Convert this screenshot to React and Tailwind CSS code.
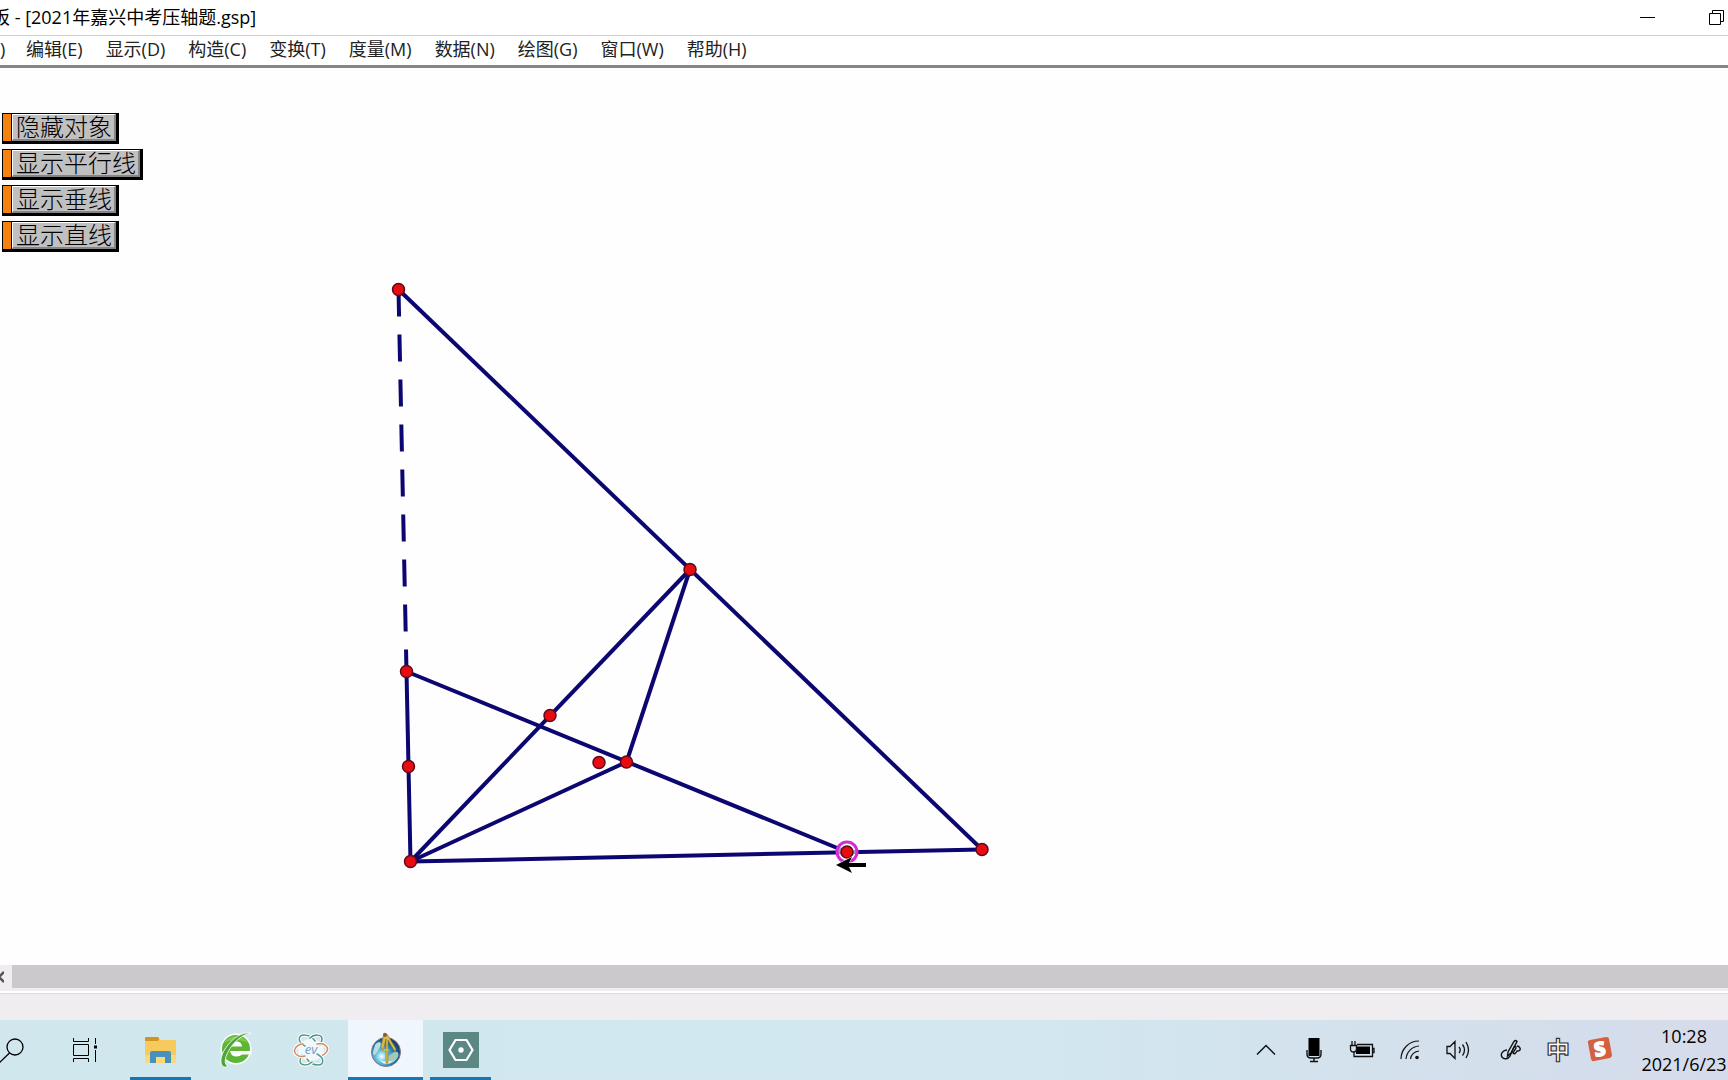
import { clsx } from 'clsx'

const menus = ['编辑(E)', '显示(D)', '构造(C)', '变换(T)', '度量(M)', '数据(N)', '绘图(G)', '窗口(W)', '帮助(H)']

const actions = ['隐藏对象', '显示平行线', '显示垂线', '显示直线']

// sketch coordinates, relative to the top left of the canvas
const P = {
  top: [398.5, 221.5],
  mid: [690, 501.5],
  origin: [410.5, 793.5],
  right: [982, 781.5],
  drag: [847, 784],
  left: [406.5, 603.5],
  leftMid: [408.5, 698.5],
  inner: [550, 647.5],
  free: [599, 694.5],
  cross: [626.5, 694],
}

const segments = [
  ['top', 'right'],
  ['origin', 'mid'],
  ['mid', 'cross'],
  ['origin', 'cross'],
  ['left', 'drag'],
  ['left', 'origin'],
  ['origin', 'right'],
]

function TitleBar() {
  return (
    <header className="flex h-9 shrink-0 items-center border-b border-[#d0d0d0] bg-white">
      <h1 className="-ml-2 flex-1 whitespace-pre pb-0.5 text-lg leading-8 text-black">板 - [2021年嘉兴中考压轴题.gsp]</h1>
      <button aria-label="Minimize" className="flex h-8 w-[69px] items-center justify-center">
        <svg width="15" height="15" stroke="#000" fill="none"><path d="M0 7.5H15" /></svg>
      </button>
      <button aria-label="Restore" className="flex h-8 w-[46px] items-center pl-[27px]">
        <svg width="15" height="15" stroke="#000" fill="none"><path d="M.5 3.5H11.5V14.5H.5ZM3.5 3.5V.5H14.5V11.5H11.5" /></svg>
      </button>
    </header>
  )
}

function MenuBar() {
  return (
    <nav className="flex h-8 shrink-0 items-center border-b-[3px] border-[#858585] bg-white pb-1 text-lg leading-6 text-[#222]">
      <button className="w-[26px] text-left">)</button>
      <div className="flex gap-[23px]">
        {menus.map((m) => (
          <button key={m} className="whitespace-nowrap">{m}</button>
        ))}
      </div>
    </nav>
  )
}

function ActionButton({ label }) {
  return (
    <button className="flex h-[31px] border border-r-[3px] border-b-[3px] border-black bg-[#c0c0c0]">
      <span className="h-full w-[9px] border-r border-black bg-[#f5820f]" />
      <span className="h-full border-t border-r-2 border-b-2 border-l border-t-white border-r-[#858585] border-b-[#858585] border-l-white pr-0.5 pl-[3px] text-2xl leading-6 font-light text-black">
        {label}
      </span>
    </button>
  )
}

function Sketch() {
  return (
    <svg className="absolute inset-0 h-full w-full">
      <g stroke="#0c0670" strokeWidth="4">
        <line x1={P.top[0]} y1={P.top[1]} x2={P.left[0]} y2={P.left[1]} strokeDasharray="27 18" />
        {segments.map(([a, b]) => (
          <line key={a + b} x1={P[a][0]} y1={P[a][1]} x2={P[b][0]} y2={P[b][1]} />
        ))}
      </g>
      <circle cx={P.drag[0]} cy={P.drag[1]} r="10" fill="#fff" fillOpacity=".6" stroke="#d42bd6" strokeWidth="3" />
      {Object.entries(P).map(([name, [x, y]]) => (
        <circle key={name} cx={x} cy={y} r="6" fill="#e80c12" stroke="#5d0a18" strokeWidth="1.5" />
      ))}
      {/* drag cursor */}
      <path d="M836 797L852 789L849 795H866V799H849L852 805Z" fill="#000" stroke="#fff" strokeWidth="1" paintOrder="stroke" />
    </svg>
  )
}

function ScrollBar() {
  return (
    <div className="shrink-0 bg-[#efedf0]">
      <div className="flex h-[23px]">
        <button aria-label="Scroll left" className="flex w-3 items-center">
          <svg width="4" height="12" fill="none" stroke="#555" strokeWidth="2.5"><path d="M4 1L-1 6L4 11" /></svg>
        </button>
        <div className="flex-1 bg-[#cbc9cc]" />
      </div>
      <div className="mt-[3px] h-0.5 bg-white" />
      <div className="h-[27px] border-t border-[#dddadd]" />
    </div>
  )
}

function Search() {
  return (
    <svg width="26" height="26" fill="none" stroke="#000" strokeWidth="1.3">
      <circle cx="15" cy="10" r="8" />
      <path d="M9.500 16L-1 26" />
    </svg>
  )
}

function TaskView() {
  return (
    <svg width="25" height="24" fill="none" stroke="#000">
      <path d="M.5 0V3.5H15.5V0M.5 6.5H15.5V17.5H.5ZM.5 24V20.5H15.5V24M22.5 0V6M22.5 12V24" />
      <path d="M21 7.5H24V10.5H21Z" fill="#000" stroke="none" />
    </svg>
  )
}

function Folder() {
  return (
    <svg width="33" height="28">
      <path d="M1 2Q1 1 2 1H14L17 4H31Q32 4 32 5V26H1Z" fill="#f6ca5c" />
      <path d="M1 2Q1 1 2 1H14Q16 2 14 5H1Z" fill="#cf951e" />
      <path d="M1 19H32V26Q32 27 31 27H2Q1 27 1 26Z" fill="#fad979" />
      <path d="M6 27V17Q6 15 8 15H25Q27 15 27 17V27H21V21H12V27Z" fill="#4692be" />
    </svg>
  )
}

function Browser() {
  return (
    <svg width="34" height="38">
      <circle cx="17" cy="18" r="15.500" fill="#fff" />
      <circle cx="17" cy="18" r="14" fill="#5cb533" />
      <path d="M5 12A14 14 0 0 1 29 12Q18 6 5 12Z" fill="#80ca50" />
      <path d="M11 15.500Q12.500 10.500 17.500 10.500Q22.500 10.500 23 15.500Z" fill="#fff" />
      <path d="M11 20H32.500V23.500H23Q21 25.500 17.500 25.500Q12 25.500 11 20Z" fill="#fff" />
      <path d="M32 2.500C24 0 13 7 6 18C1 26 1 33 4 35.500C6 36.500 8 36 9 35C6 34 5 30 8 23C13 12 23 3 32 2.500Z" fill="#4da338" stroke="#fff" strokeWidth=".8" />
    </svg>
  )
}

// arms of the recorder logo, each one starts near the centre and hooks round
const arms = [
  ['M12 13C4 9 5 2 11 2C16 2 20 5 22 8', '#4f9a92'],
  ['M17 5C21 1 29 1 29 6C29 8 28 10 27 12', '#3d9383'],
  ['M24 11C31 9 36 14 34 18C33 21 29 23 26 23', '#d08a66'],
  ['M24 21C32 25 31 32 25 32C20 32 16 29 14 26', '#4f9a92'],
  ['M19 29C15 33 7 33 7 28C7 26 8 24 9 22', '#579c7c'],
  ['M12 23C5 25 0 20 2 16C3 13 7 11 10 11', '#d08a66'],
]

function EvCapture() {
  return (
    <svg width="36" height="34" fill="none">
      <ellipse cx="18" cy="17" rx="13" ry="11" fill="#fff" fillOpacity=".7" />
      {arms.map(([d, color]) => (
        <g key={d}>
          <path d={d} stroke="#fff" strokeWidth="3.500" />
          <path d={d} stroke={color} strokeWidth="1.500" strokeLinecap="round" />
        </g>
      ))}
      <text x="18" y="21" textAnchor="middle" fontSize="13" fontStyle="italic" fill="#6d9ccb">ev</text>
    </svg>
  )
}

function Sketchpad() {
  return (
    <svg width="32" height="36">
      <defs>
        <radialGradient id="globe" cx="35%" cy="65%" r="75%">
          <stop offset="0" stopColor="#fff" />
          <stop offset=".25" stopColor="#69c7e3" />
          <stop offset=".6" stopColor="#1976b4" />
          <stop offset="1" stopColor="#18294f" />
        </radialGradient>
      </defs>
      <circle cx="16" cy="20" r="14.500" fill="url(#globe)" stroke="#8b7484" />
      <path d="M5 13C10 7 13 11 9 17C5 24 3 25 3 20Z" fill="#b7dfe0" />
      <path d="M20 23C25 18 30 19 28 25C25 31 17 34 12 31Z" fill="#9fc9ba" />
      <path d="M9 28Q16 35 24 28Q17 31 9 28Z" fill="#eef6f6" />
      <path d="M14 1L11 15L13 19L16 7L16 31L18 31L18 8L25 20L26 17L17 2Z" fill="#d9bd45" stroke="#8d7a2c" strokeWidth=".6" />
      <path d="M13 18H19" stroke="#d9bd45" strokeWidth="1.500" />
      <circle cx="15" cy="3" r="2" fill="#8d5841" />
    </svg>
  )
}

function HexTool() {
  return (
    <svg width="36" height="36" fill="none">
      <rect width="36" height="36" fill="#5b8784" />
      <path d="M12.5 8H23.5L29.5 18L23.5 28H12.5L6.500 18Z" stroke="#fff" strokeWidth="2.2" />
      <circle cx="18" cy="18" r="2.7" fill="#fff" />
    </svg>
  )
}

const tasks = [
  { name: 'Task View', icon: TaskView },
  { name: 'File Explorer', icon: Folder, open: true },
  { name: 'Browser', icon: Browser },
  { name: 'Recorder', icon: EvCapture },
  { name: 'Sketchpad', icon: Sketchpad, active: true },
  { name: 'Tool', icon: HexTool, open: true },
]

const tray = [
  {
    name: 'Hidden icons',
    width: 'w-12',
    icon: <svg width="20" height="12" fill="none" stroke="#111" strokeWidth="1.5"><path d="M1 10.500L10 1.500L19 10.500" /></svg>,
  },
  {
    name: 'Microphone',
    width: 'w-12',
    icon: (
      <svg width="16" height="26" fill="none" stroke="#111" strokeWidth="1.4">
        <rect x="2.500" y="1" width="11" height="18" fill="#000" stroke="none" />
        <path d="M1 13V17Q1 21 5 21H11Q15 21 15 17V13M8 21V24M4 24.500H12" />
      </svg>
    ),
  },
  {
    name: 'Battery',
    width: 'w-12',
    icon: (
      <svg width="26" height="18" fill="none" stroke="#111" strokeWidth="1.300">
        <path d="M8 3.500H23.500V15.500H5V11M23.500 7.500H25V11.500H23.500" />
        <path d="M7 5.500H21V13H7Z" fill="#000" stroke="none" />
        <path d="M1.500 4.500H7.500V8Q7.500 11 4.500 11Q1.500 11 1.500 8ZM3 4V0M6 4V0" fill="#d5deec" />
      </svg>
    ),
  },
  {
    name: 'Network',
    width: 'w-12',
    icon: (
      <svg width="20" height="20" fill="none" stroke="#111" strokeWidth="1.200">
        <path d="M1 19A18 18 0 0 1 19 1M6 19A14 14 0 0 1 19 6M10.500 19A9 9 0 0 1 19 11" />
        <circle cx="17" cy="17.500" r="1.800" fill="#111" stroke="none" />
      </svg>
    ),
  },
  {
    name: 'Volume',
    width: 'w-12',
    icon: (
      <svg width="24" height="20" fill="none" stroke="#111" strokeWidth="1.300">
        <path d="M1 6.500H4L9 1.500V18.500L4 13.500H1ZM13 7Q15.500 10 13 13M16.500 4.500Q20.500 10 16.500 15.500M20 2Q25 10 20 18" />
      </svg>
    ),
  },
  {
    name: 'Pen',
    width: 'w-[58px]',
    icon: (
      <svg width="22" height="22" fill="none" stroke="#111" strokeWidth="1.400">
        <path d="M7.500 17L8 13L14 2.500Q15.500 .5 17 2.500L11 14Z" />
        <path d="M7 11C3 11 0 15 2 18C4 21 8 20 10 17L14 8Q16 6 16 9L13 14Q15 16 17 12Q21 12 20 9Q19 7 17 7" />
      </svg>
    ),
  },
  {
    name: 'Input mode',
    width: 'w-9',
    icon: (
      <svg width="32" height="40">
        <text x="16" y="29" textAnchor="middle" fontSize="24" fontWeight="700" fill="#fff" stroke="#333" strokeWidth="1.200">中</text>
      </svg>
    ),
  },
  {
    name: 'Input method',
    width: 'w-12',
    icon: (
      <svg width="32" height="40">
        <path d="M4 13Q3 11 6 10L22 7Q25 7 25 9L28 25Q28 27 26 28L10 31Q8 32 7 29Z" fill="#d5603f" />
        <text x="16" y="26" fontSize="20" fontWeight="800" textAnchor="middle" fill="#fff" stroke="#fff" transform="rotate(-10 16 20)">S</text>
      </svg>
    ),
  },
]

function Taskbar() {
  return (
    <footer className="flex h-[60px] shrink-0 items-stretch bg-linear-to-r from-[#d1e7ee] via-[#d2e7f0] via-60% to-[#d5dbea]">
      <button aria-label="Search" className="flex w-12 items-center"><Search /></button>
      {tasks.map(({ name, icon: Icon, open, active }) => (
        <button
          key={name}
          aria-label={name}
          className={clsx('relative flex w-[75px] items-center justify-center', active && 'bg-[#eff7fc]')}
        >
          <Icon />
          {(open || active) && (
            <span className={clsx('absolute bottom-0 h-[3px] bg-[#1776b5]', active ? 'inset-x-0' : 'inset-x-[7px]')} />
          )}
        </button>
      ))}
      <div className="ml-auto flex">
        {tray.map(({ name, width, icon }) => (
          <button key={name} aria-label={name} className={clsx('flex items-center justify-center', width)}>
            {icon}
          </button>
        ))}
      </div>
      <button className="ml-4 flex w-[88px] flex-col items-center justify-center text-lg leading-7 whitespace-nowrap text-black">
        <span>10:28</span>
        <span>2021/6/23</span>
      </button>
    </footer>
  )
}

function App() {
  return (
    <div className="flex h-screen flex-col overflow-hidden bg-[#fefefe] font-['Open_Sans','Noto_Sans_CJK_SC',sans-serif]">
      <TitleBar />
      <MenuBar />
      <main className="relative flex-1">
        <Sketch />
        <div className="relative flex w-fit flex-col items-start gap-[5px] pt-[45px] pl-0.5">
          {actions.map((a) => (
            <ActionButton key={a} label={a} />
          ))}
        </div>
      </main>
      <ScrollBar />
      <Taskbar />
    </div>
  )
}

export default App
